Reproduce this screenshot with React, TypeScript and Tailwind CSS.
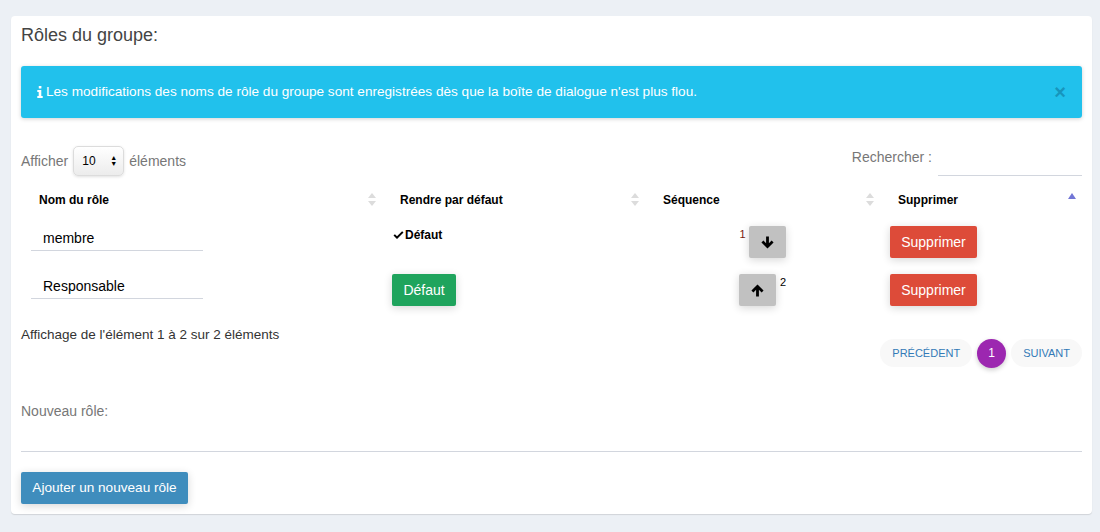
import React from "react";

const font = "font-['Liberation_Sans',Arial,sans-serif]";

function SortBoth() {
    return (
        <svg width="8" height="13" viewBox="0 0 8 13" className="shrink-0">
            <path d="M4 0 L8 5 H0 Z" fill="#dcdcdc" />
            <path d="M4 13 L8 8 H0 Z" fill="#dcdcdc" />
        </svg>
    );
}

function SortAsc() {
    return (
        <svg width="8" height="13" viewBox="0 0 8 13" className="shrink-0">
            <path d="M4 0 L8 6 H0 Z" fill="#7276d6" />
        </svg>
    );
}

function InfoIcon() {
    return (
        <svg width="6" height="12" viewBox="0 0 6 12" className="shrink-0">
            <rect x="1.8" y="0" width="2.6" height="2.6" rx="0.4" fill="white" />
            <path d="M0.3 4 H4.3 V10 H5.7 V12 H0.3 V10 H1.7 V6 H0.3 Z" fill="white" />
        </svg>
    );
}

function Check() {
    return (
        <svg width="11" height="9" viewBox="0 0 11 9" className="shrink-0">
            <path d="M0.5 4.6 L1.9 3.2 L4 5.3 L9.1 0.2 L10.5 1.6 L4 8.1 Z" fill="black" />
        </svg>
    );
}

function Arrow({ dir }: { dir: "up" | "down" }) {
    return (
        <svg
            width="13"
            height="13"
            viewBox="0 0 12 12"
            className={dir === "up" ? "rotate-180" : ""}
        >
            <path d="M6 11.6 L0.4 6 L2.2 4.2 L4.7 6.7 V0.4 H7.3 V6.7 L9.8 4.2 L11.6 6 Z" fill="black" />
        </svg>
    );
}

const roles = [
    { name: "membre", isDefault: true, seq: 1 },
    { name: "Responsable", isDefault: false, seq: 2 },
];

const btnShadow = "shadow-[0_2px_8px_rgba(0,0,0,0.16)]";

export default function App() {
    return (
        <div className={`w-[1100px] min-h-[532px] bg-[#ecf0f5] pt-[16px] pl-[11px] ${font}`}>
            <div className="w-[1081px] h-[498px] bg-white rounded-[4px] shadow-[0_1px_1px_rgba(0,0,0,0.12)] px-[10px] pt-[9px]">
                {/* Title */}
                <h3 className="text-[18px] leading-[20px] text-[#444]">Rôles du groupe:</h3>

                {/* Info alert */}
                <div className="mt-[21px] h-[52px] rounded-[3px] bg-[#21c1ec] shadow-[0_1px_4px_rgba(0,0,0,0.18)] flex items-center pl-[16px] pr-[16px]">
                    <InfoIcon />
                    <span className="ml-[3px] text-[13.6px] text-white">
                        Les modifications des noms de rôle du groupe sont enregistrées dès que la boîte de dialogue n'est plus flou.
                    </span>
                    <span className="ml-auto text-[20px] font-bold leading-none text-[#1795bc]">×</span>
                </div>

                {/* Length + search */}
                <div className="mt-[28px] h-[30px] flex items-center justify-between">
                    <div className="flex items-center text-[14px] text-[#777]">
                        <span>Afficher</span>
                        <div className="ml-[5px] w-[51px] h-[30px] rounded-[5px] border border-[#dcdcdc] bg-gradient-to-b from-white to-[#ececec] shadow-[0_1px_3px_rgba(0,0,0,0.12)] flex items-center pl-[8px] pr-[6px]">
                            <span className="text-[12px] text-black">10</span>
                            <span className="ml-auto flex flex-col text-[7px] leading-[6px] text-black">
                                <span>▲</span>
                                <span>▼</span>
                            </span>
                        </div>
                        <span className="ml-[5px]">éléments</span>
                    </div>
                    <div className="flex items-center">
                        <span className="text-[14px] text-[#777] -mt-[8px]">Rechercher :</span>
                        <div className="ml-[6px] w-[144px] h-[30px] border-b border-[#d2d6de]" />
                    </div>
                </div>

                {/* Table */}
                <div className="mt-[10px]">
                    <div className="grid grid-cols-[362px_262px_235px_202px] h-[26px] pt-[1px] text-[12px] font-bold text-black">
                        <div className="flex items-center justify-between pl-[18px] pr-[7px]">
                            <span>Nom du rôle</span>
                            <SortBoth />
                        </div>
                        <div className="flex items-center justify-between pl-[17px] pr-[6px]">
                            <span>Rendre par défaut</span>
                            <SortBoth />
                        </div>
                        <div className="flex items-center justify-between pl-[18px] pr-[6px]">
                            <span>Séquence</span>
                            <SortBoth />
                        </div>
                        <div className="flex items-center justify-between pl-[18px] pr-[6px]">
                            <span>Supprimer</span>
                            <SortAsc />
                        </div>
                    </div>

                    {roles.map((r) => (
                        <div key={r.name} className="grid grid-cols-[362px_262px_235px_202px] h-[48px]">
                            <div className="pl-[10px] pt-[9px]">
                                <div className="w-[172px] h-[30px] border-b border-[#d2d6de] flex items-center pl-[12px] pt-[5px] text-[14px] text-black">
                                    {r.name}
                                </div>
                            </div>
                            <div className="pl-[9px]">
                                {r.isDefault ? (
                                    <div className="pt-[15px] pl-[1px] flex items-center h-[31px] text-[12px] font-bold text-black">
                                        <Check />
                                        <span className="ml-[1px]">Défaut</span>
                                    </div>
                                ) : (
                                    <div className="pt-[14px]">
                                        <div className={`w-[64px] h-[32px] rounded-[2px] bg-[#1fa45d] text-white text-[14px] flex items-center justify-center ${btnShadow}`}>
                                            Défaut
                                        </div>
                                    </div>
                                )}
                            </div>
                            <div className="pt-[14px] flex justify-center items-start">
                                {r.seq === 1 ? (
                                    <>
                                        <span className="mt-[3px] mr-[3px] text-[11px] leading-none text-[#7a1a10]">1</span>
                                        <div className={`w-[37px] h-[32px] rounded-[2px] bg-[#c1c1c1] flex items-center justify-center ${btnShadow}`}>
                                            <Arrow dir="down" />
                                        </div>
                                    </>
                                ) : (
                                    <>
                                        <div className={`w-[37px] h-[32px] rounded-[2px] bg-[#c1c1c1] flex items-center justify-center ${btnShadow}`}>
                                            <Arrow dir="up" />
                                        </div>
                                        <span className="mt-[3px] ml-[4px] text-[11px] leading-none text-black">2</span>
                                    </>
                                )}
                            </div>
                            <div className="pl-[10px] pt-[14px]">
                                <div className={`w-[87px] h-[32px] rounded-[2px] bg-[#dd4b39] text-white text-[14px] flex items-center justify-center ${btnShadow}`}>
                                    Supprimer
                                </div>
                            </div>
                        </div>
                    ))}
                </div>

                {/* Info + pagination */}
                <div className="flex justify-between h-[59px]">
                    <div className="pt-[18px] text-[13.5px] leading-[18px] text-[#333]">
                        Affichage de l'élément 1 à 2 sur 2 éléments
                    </div>
                    <div className="pt-[31px] flex items-center gap-[5px] text-[11px] text-[#337ab7]">
                        <span className="h-[28px] px-[12px] rounded-full bg-[#f8f8f8] flex items-center">PRÉCÉDENT</span>
                        <span className="w-[29px] h-[29px] rounded-full bg-[#9c27b0] text-white text-[12px] flex items-center justify-center shadow-[0_2px_5px_rgba(0,0,0,0.2)]">
                            1
                        </span>
                        <span className="h-[28px] px-[12px] rounded-full bg-[#f8f8f8] flex items-center">SUIVANT</span>
                    </div>
                </div>

                {/* New role */}
                <div className="mt-[34px] text-[14px] leading-[20px] text-[#777]">Nouveau rôle:</div>
                <div className="mt-[1px] h-[30px] border-b border-[#d2d6de]" />
                <div className={`mt-[20px] w-[167px] h-[32px] rounded-[2px] bg-[#3f8dbd] text-white text-[13.6px] flex items-center justify-center ${btnShadow}`}>
                    Ajouter un nouveau rôle
                </div>
            </div>
        </div>
    );
}
